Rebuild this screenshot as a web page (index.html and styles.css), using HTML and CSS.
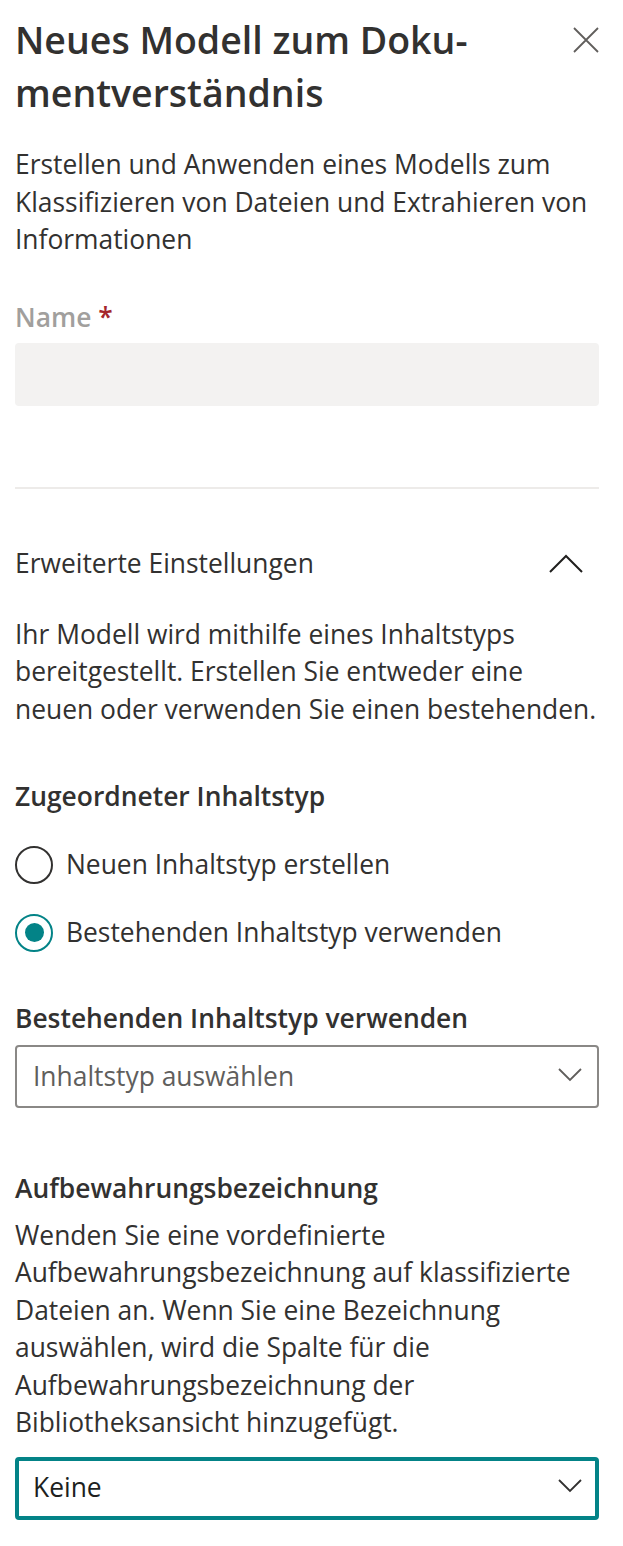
FILE: index.html
```html
<!DOCTYPE html>
<html lang="de">
<head>
<meta charset="utf-8">
<link rel="stylesheet" href="styles.css">
</head>
<body>
<div class="panel">
  <header class="head">
    <h1 class="title">Neues Modell zum Doku&shy;mentverständnis</h1>
    <button class="close" aria-label="Schließen">
      <svg width="26" height="26" viewBox="0 0 26 26"><path d="M1 1 L25 25 M25 1 L1 25" stroke="#605e5c" stroke-width="1.8" fill="none"/></svg>
    </button>
  </header>

  <p class="desc">Erstellen und Anwenden eines Modells zum Klassifizieren von Dateien und Extrahieren von Informationen</p>

  <label class="label disabled">Name <span class="req">*</span></label>
  <div class="input"></div>

  <hr class="divider">

  <div class="section-head">
    <span>Erweiterte Einstellungen</span>
    <svg class="chev-up" width="34" height="20" viewBox="0 0 34 20"><path d="M1 18 L17 2 L33 18" stroke="#201f1e" stroke-width="2" fill="none"/></svg>
  </div>

  <p class="text intro">Ihr Modell wird mithilfe eines Inhaltstyps bereitgestellt. Erstellen Sie entweder eine neuen oder verwenden Sie einen bestehenden.</p>

  <div class="label strong ct-label">Zugeordneter Inhaltstyp</div>
  <div class="radios">
    <div class="radio"><span class="circle"></span><span>Neuen Inhaltstyp erstellen</span></div>
    <div class="radio checked"><span class="circle"></span><span>Bestehenden Inhaltstyp verwenden</span></div>
  </div>

  <div class="label strong existing-label">Bestehenden Inhaltstyp verwenden</div>
  <div class="dropdown">
    <span class="placeholder">Inhaltstyp auswählen</span>
    <svg class="chev-down" width="24" height="14" viewBox="0 0 24 14"><path d="M1 1 L12 12 L23 1" stroke="#605e5c" stroke-width="1.8" fill="none"/></svg>
  </div>

  <div class="label strong ret-label">Aufbewahrungsbezeichnung</div>
  <p class="text ret-text">Wenden Sie eine vordefinierte Aufbewahrungsbezeichnung auf klassifizierte Dateien an. Wenn Sie eine Bezeichnung auswählen, wird die Spalte für die Aufbewahrungsbezeichnung der Bibliotheksansicht hinzugefügt.</p>
  <div class="dropdown focused">
    <span class="value">Keine</span>
    <svg class="chev-down" width="24" height="14" viewBox="0 0 24 14"><path d="M1 1 L12 12 L23 1" stroke="#323130" stroke-width="1.8" fill="none"/></svg>
  </div>
</div>
</body>
</html>
```
FILE: styles.css
```css
* { box-sizing: border-box; }
html, body { margin: 0; padding: 0; background: #fff; }
body {
  font-family: "Open Sans", "Noto Sans", sans-serif;
  color: #323130;
  font-size: 26.4px;
  line-height: 37.5px;
}
.panel {
  width: 623px;
  padding: 13px 24px 0 15px;
}
.head {
  display: flex;
  align-items: flex-start;
  justify-content: space-between;
}
.title {
  margin: 0;
  font-size: 37.5px;
  line-height: 53px;
  font-weight: 600;
  color: #323130;
  width: 520px;
  hyphens: manual;
}
.close {
  border: 0;
  background: none;
  padding: 0;
  margin-top: 14px;
  width: 26px;
  height: 26px;
  display: flex;
}
.desc {
  margin: 27px 0 0;
  width: 584px;
}
.label {
  display: block;
  font-weight: 600;
}
.label.disabled {
  margin-top: 40px;
  color: #a19f9d;
}
.req { color: #a4262c; }
.input {
  margin-top: 7px;
  height: 63px;
  width: 584px;
  background: #f3f2f1;
  border-radius: 4px;
}
.divider {
  margin: 81px 0 0;
  width: 584px;
  border: 0;
  height: 2px;
  background: #edebe9;
}
.section-head {
  margin-top: 56px;
  width: 584px;
  display: flex;
  align-items: center;
  justify-content: space-between;
  padding-right: 16px;
}
.text { margin: 0; width: 584px; }
.intro { margin-top: 33px; }
.ct-label { margin-top: 50px; }
.radios {
  margin-top: 30px;
  display: flex;
  flex-direction: column;
  gap: 30px;
}
.radio {
  display: flex;
  align-items: center;
  gap: 13px;
}
.circle {
  width: 38px;
  height: 38px;
  border-radius: 50%;
  border: 2px solid #323130;
  flex: none;
  display: flex;
  align-items: center;
  justify-content: center;
}
.radio.checked .circle { border-color: #038387; }
.radio.checked .circle::after {
  content: "";
  width: 19px;
  height: 19px;
  border-radius: 50%;
  background: #038387;
}
.existing-label { margin-top: 48px; }
.dropdown {
  margin-top: 8px;
  width: 584px;
  height: 63px;
  border: 2px solid #8a8886;
  border-radius: 4px;
  display: flex;
  align-items: center;
  justify-content: space-between;
  padding: 0 15px 0 16px;
}
.placeholder { color: #605e5c; }
.chev-down { margin-top: -4px; }
.ret-label { margin-top: 62px; }
.ret-text { margin-top: 9px; }
.dropdown.focused {
  margin-top: 15px;
  border: 4px solid #038387;
  padding: 0 13px 0 14px;
}
.value { color: #201f1e; }
```
